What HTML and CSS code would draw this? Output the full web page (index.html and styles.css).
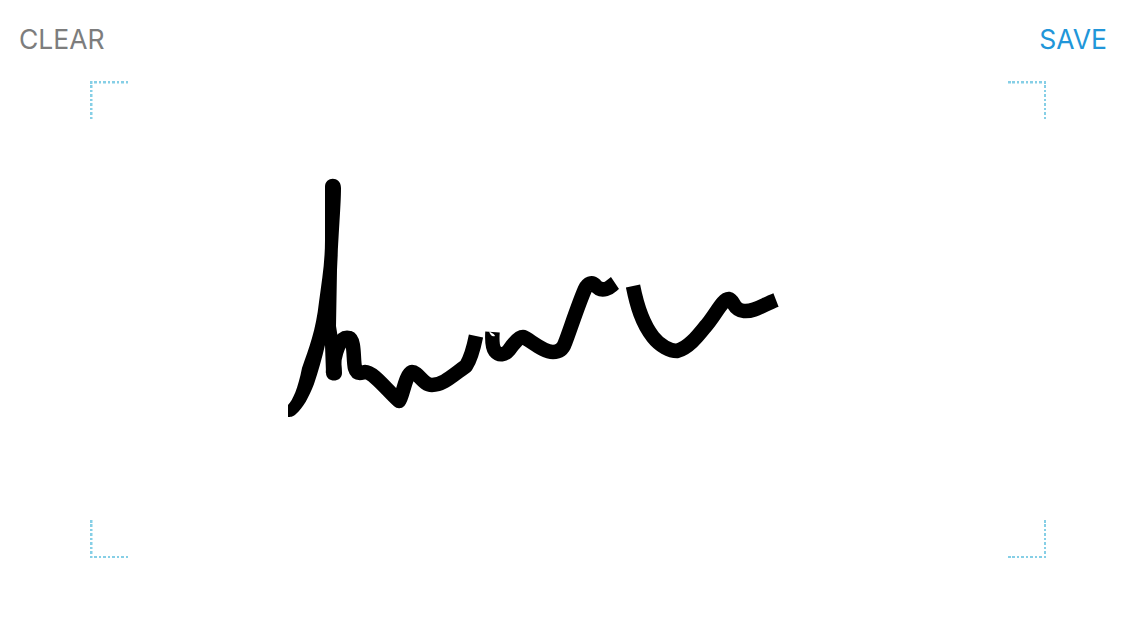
FILE: index.html
```html
<!DOCTYPE html>
<html lang="en">
<head>
<meta charset="utf-8">
<title>Signature</title>
<link rel="stylesheet" href="styles.css">
</head>
<body>
<main class="screen">
  <header class="toolbar">
    <button class="action action-clear" type="button">CLEAR</button>
    <button class="action action-save" type="button">SAVE</button>
  </header>
  <section class="frame">
    <div class="corners">
      <span class="corner corner-tl"></span>
      <span class="corner corner-tr"></span>
      <span class="corner corner-bl"></span>
      <span class="corner corner-br"></span>
    </div>
  </section>
  <svg class="signature" width="1136" height="639" viewBox="0 0 1136 639" aria-hidden="true">
    <path class="ink-fill" d="M288 405 C293 400 298 388 302 368 C309 348 316 330 319 302 C322 280 325 262 325 240 L325 187 C325 176 341 176 341 188 C341 205 339 225 337 270 L336 326 C339 345 342 362 342 373 C342 383 326 383 326 373 L325 345 C322 358 318 372 314 384 C309 397 303 408 296 414 C293 417 290 417 288 417 Z"/>
    <path class="ink-line" d="M333 373 C334 352 340 336 349 338 C355 340 353 360 355 368 C357 375 360 373 365 372 C373 372 385 388 399 401 C403 396 405 375 412 372 C418 372 423 385 432 385 C443 385 452 376 466 366 C471 358 474 346 476 336"/>
    <path class="ink-line" d="M492.500 332 C492 340 492 347 495 351 C499 356 505 355 509 350 C513 344 519 337 523 337 C529 339 543 352 553 352 C559 352 563 349 565 343 C569 333 578 305 585 289 C588 283 592 282 595 285 C598 289 602 290 606 289 C610 288 612 285 615 283"/>
    <path class="ink-line" d="M633 286 C637 306 642 323 653 337 C660 346 670 351 677 351 C688 348 697 337 705 327 C715 316 723 298 729 299 C734 300 733 310 744 311 C754 312 763 305 776 300"/>
    <path class="ink-nick" d="M489 331 C491 333 494 333 495 336 C492 337 490 335 489 331 Z"/>
  </svg>
</main>
</body>
</html>
```
FILE: styles.css
```css
* {
  box-sizing: border-box;
}

html,
body {
  margin: 0;
  height: 100%;
  background: #fff;
  overflow: hidden;
}

.screen {
  position: relative;
  width: 1136px;
  height: 639px;
  display: flex;
  flex-direction: column;
  font-family: Inter, "Liberation Sans", sans-serif;
}

.toolbar {
  display: flex;
  justify-content: space-between;
  padding: 23px 29px 0 19px;
}

.action {
  border: 0;
  padding: 0;
  background: none;
  font: 370 26.5px/32px Inter, "Liberation Sans", sans-serif;
}

.action-clear {
  color: #7d7d7d;
}

.action-save {
  color: #2196d9;
}

.frame {
  padding: 26px 90px 0;
}

.corners {
  display: grid;
  grid-template-columns: 38px 38px;
  grid-template-rows: 38px 38px;
  justify-content: space-between;
  row-gap: 401px;
}

.corner {
  --dots-x: repeating-linear-gradient(90deg, #86cfe6 0 2.500px, transparent 2.500px 4.440px);
  --dots-y: repeating-linear-gradient(180deg, #86cfe6 0 2.500px, transparent 2.500px 4.440px);
  background-image: var(--dots-x), var(--dots-y);
  background-size: 100% 2.500px, 2.500px 100%;
  background-repeat: no-repeat;
}

.corner-tl {
  background-position: left top, left top;
}

.corner-tr {
  background-position: right top, right top;
}

.corner-bl {
  background-position: left bottom, left bottom;
}

.corner-br {
  background-position: right bottom, right bottom;
}

.signature {
  position: absolute;
  left: 0;
  top: 0;
}

.ink-fill {
  fill: #000;
}

.ink-line {
  fill: none;
  stroke: #000;
  stroke-width: 14.5;
  stroke-linejoin: round;
  stroke-linecap: butt;
}

.ink-nick {
  fill: #fff;
}
```
